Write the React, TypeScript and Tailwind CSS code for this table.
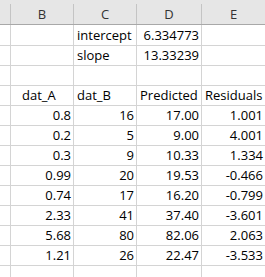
import React from "react";

const cols = ["", "B", "C", "D", "E"];

type Cell = { v: string; align?: "l" | "r"; pad?: string };

const rows: Cell[][] = [
  [{ v: "" }, { v: "" }, { v: "intercept", align: "l" }, { v: "6.334773", align: "r" }, { v: "" }],
  [{ v: "" }, { v: "" }, { v: "slope", align: "l" }, { v: "13.33239", align: "r" }, { v: "" }],
  [{ v: "" }, { v: "" }, { v: "" }, { v: "" }, { v: "" }],
  [
    { v: "" },
    { v: "dat_A", align: "l", pad: "pl-[11px]" },
    { v: "dat_B", align: "l" },
    { v: "Predicted", align: "l" },
    { v: "Residuals", align: "l" },
  ],
  ...[
    ["0.8", "16", "17.00", "1.001"],
    ["0.2", "5", "9.00", "4.001"],
    ["0.3", "9", "10.33", "1.334"],
    ["0.99", "20", "19.53", "-0.466"],
    ["0.74", "17", "16.20", "-0.799"],
    ["2.33", "41", "37.40", "-3.601"],
    ["5.68", "80", "82.06", "2.063"],
    ["1.21", "26", "22.47", "-3.533"],
  ].map((r) => [{ v: "" }, ...r.map((v) => ({ v, align: "r" as const }))]),
  [{ v: "" }, { v: "" }, { v: "" }, { v: "" }, { v: "" }],
];

export default function App() {
  return (
    <div
      className="w-[265px] h-[277px] overflow-hidden bg-white text-[13px] text-black"
      style={{ fontFamily: '"Open Sans", "Liberation Sans", sans-serif' }}
    >
      <div className="w-[266px]">
        <div className="grid grid-cols-[11px_63px_63px_65px_64px] h-[25px] bg-[#e6e6e6] border-b border-[#a8a8a8]">
          {cols.map((c, i) => (
            <div key={i} className="flex h-[24px]">
              <div className="flex-1 flex items-end justify-center leading-[20px] text-[#333]">{c}</div>
              <div className="w-px h-[20px] self-end bg-[#c4c4c4]" />
            </div>
          ))}
        </div>
        {rows.map((r, ri) => (
          <div
            key={ri}
            className={`grid grid-cols-[11px_63px_63px_65px_64px] ${ri === 0 ? "h-[21px]" : "h-[20px]"}`}
          >
            {r.map((c, ci) => (
              <div
                key={ci}
                className={`border-r border-b border-[#d4d4d4] flex items-end leading-[19px] whitespace-nowrap ${
                  c.align === "r" ? "justify-end pr-[2px]" : "justify-start " + (c.pad ?? "pl-[3px]")
                }`}
              >
                {c.v}
              </div>
            ))}
          </div>
        ))}
      </div>
    </div>
  );
}
